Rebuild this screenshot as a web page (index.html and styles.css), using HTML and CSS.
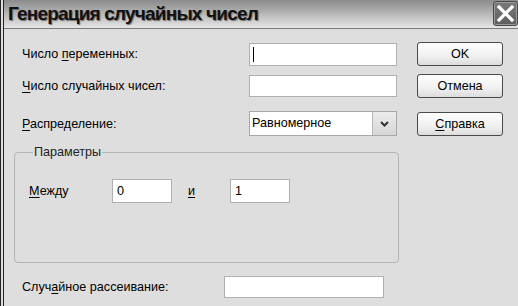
FILE: index.html
```html
<!DOCTYPE html>
<html>
  <head>
    <title>Генерация случайных чисел</title>
    <link rel="stylesheet" href="styles.css">
  </head>

  <body>
    <div class="window">
      <!-- Title bar -->
      <div class="titlebar">
        <span class="title">Генерация случайных чисел</span>
        <span class="close">
          <svg width="19" height="19" viewBox="0 0 19 19">
            <path d="M3 3 L16 16 M16 3 L3 16" stroke="#fff" stroke-width="3.2" stroke-linecap="square"/>
          </svg>
        </span>
      </div>

      <div class="content">
        <!-- Top rows -->
        <div class="row row-1">
          <label class="label">Число <u>п</u>еременных:</label>
          <div class="field"><span class="caret"></span></div>
          <button class="btn">OK</button>
        </div>

        <div class="row row-2">
          <label class="label"><u>Ч</u>исло случайных чисел:</label>
          <div class="field"></div>
          <button class="btn">Отмена</button>
        </div>

        <div class="row row-3">
          <label class="label"><u>Р</u>аспределение:</label>
          <div class="select">
            <span class="select-value">Равномерное</span>
            <span class="select-arrow">
              <svg width="9" height="6" viewBox="0 0 9 6">
                <path d="M1 1 L4.5 4.5 L8 1" fill="none" stroke="#333" stroke-width="2"/>
              </svg>
            </span>
          </div>
          <button class="btn"><u>С</u>правка</button>
        </div>

        <!-- Parameters group -->
        <fieldset class="group">
          <legend>Параметры</legend>
          <div class="range">
            <span class="range-label"><u>М</u>ежду</span>
            <div class="field small">0</div>
            <span class="range-and"><u>и</u></span>
            <div class="field small">1</div>
          </div>
        </fieldset>

        <!-- Seed -->
        <div class="row row-seed">
          <label class="seed-label">Случ<u>а</u>йное рассеивание:</label>
          <div class="field seed"></div>
        </div>
      </div>
    </div>
  </body>
</html>
```

FILE: styles.css
```css
* {
  margin: 0;
  padding: 0;
  box-sizing: border-box;
}

body {
  background: #dedede;
  font-family: 'Liberation Sans', Arial, sans-serif;
  font-size: 12.6px;
  color: #000;
  overflow: hidden;
}

u {
  text-decoration: underline;
  text-underline-offset: 2px;
}

.window {
  width: 518px;
  height: 306px;
  border-left: 4px double #222;
  background: #dedede;
}

.titlebar {
  height: 29px;
  display: flex;
  justify-content: space-between;
  align-items: flex-start;
  background: linear-gradient(#8c8c8c, #a9a9a9 35%, #c6c6c6 65%, #dcdcdc 90%, #e6e6e6);
  border-bottom: 1px solid #7a7a7a;
}

.title {
  font-family: 'Liberation Sans', Arial, sans-serif;
  font-weight: bold;
  font-size: 19px;
  letter-spacing: -0.8px;
  line-height: 28px;
  padding-left: 4px;
  color: #111;
  text-shadow: 1px 1px 1px #6a6a6a;
}

.close {
  width: 25px;
  height: 25px;
  margin-top: 1px;
  display: flex;
  align-items: center;
  justify-content: center;
  background: linear-gradient(#7a7a7a, #5e5e5e);
  border: 1px solid #4a4a4a;
  border-radius: 3px;
  box-shadow: inset 0 0 0 1px #9a9a9a;
}

.content {
  padding: 13px 0 0 10px;
}

.row {
  display: flex;
  align-items: center;
  height: 24px;
}

.row-2 {
  margin-top: 8px;
}

.row-3 {
  margin-top: 13px;
  height: 25px;
}

.label {
  width: 235px;
  padding-left: 8px;
}

.field {
  width: 148px;
  height: 23px;
  background: #fff;
  border: 1px solid #b0b0b0;
  display: flex;
  align-items: center;
  padding-left: 3px;
}

.row-2 .field {
  height: 22px;
}

.caret {
  width: 1px;
  height: 15px;
  background: #000;
}

.select {
  width: 148px;
  height: 25px;
  display: flex;
  background: #fff;
  border: 1px solid #a8a8a8;
}

.select-value {
  flex: 1;
  line-height: 23px;
  padding-left: 2px;
}

.select-arrow {
  width: 24px;
  display: flex;
  align-items: center;
  justify-content: center;
  background: linear-gradient(#ececec, #d6d6d6);
  border-left: 1px solid #b8b8b8;
}

.btn {
  width: 86px;
  height: 24px;
  margin-left: 20px;
  font-family: 'Liberation Sans', Arial, sans-serif;
  font-size: 12.6px;
  color: #000;
  background: linear-gradient(#fdfdfd, #f0f0f0 60%, #dcdcdc);
  border: 1px solid #4a4a4a;
  border-radius: 3px;
}

.group {
  width: 385px;
  margin-top: 8px;
  padding: 19px 0 59px 14px;
  border: 1px solid #b4b4b4;
  border-radius: 4px;
}

.group legend {
  margin-left: 4px;
  padding: 0 1px;
  line-height: 16px;
  color: #222;
}

.range {
  display: flex;
  align-items: center;
  height: 24px;
}

.range-label {
  width: 83px;
}

.field.small {
  width: 60px;
  height: 24px;
  padding-left: 4px;
}

.range-and {
  width: 42px;
  margin-left: 16px;
}

.row-seed {
  margin-top: 13px;
  height: 22px;
}

.seed-label {
  width: 210px;
  padding-left: 8px;
}

.field.seed {
  width: 160px;
  height: 22px;
}
```
